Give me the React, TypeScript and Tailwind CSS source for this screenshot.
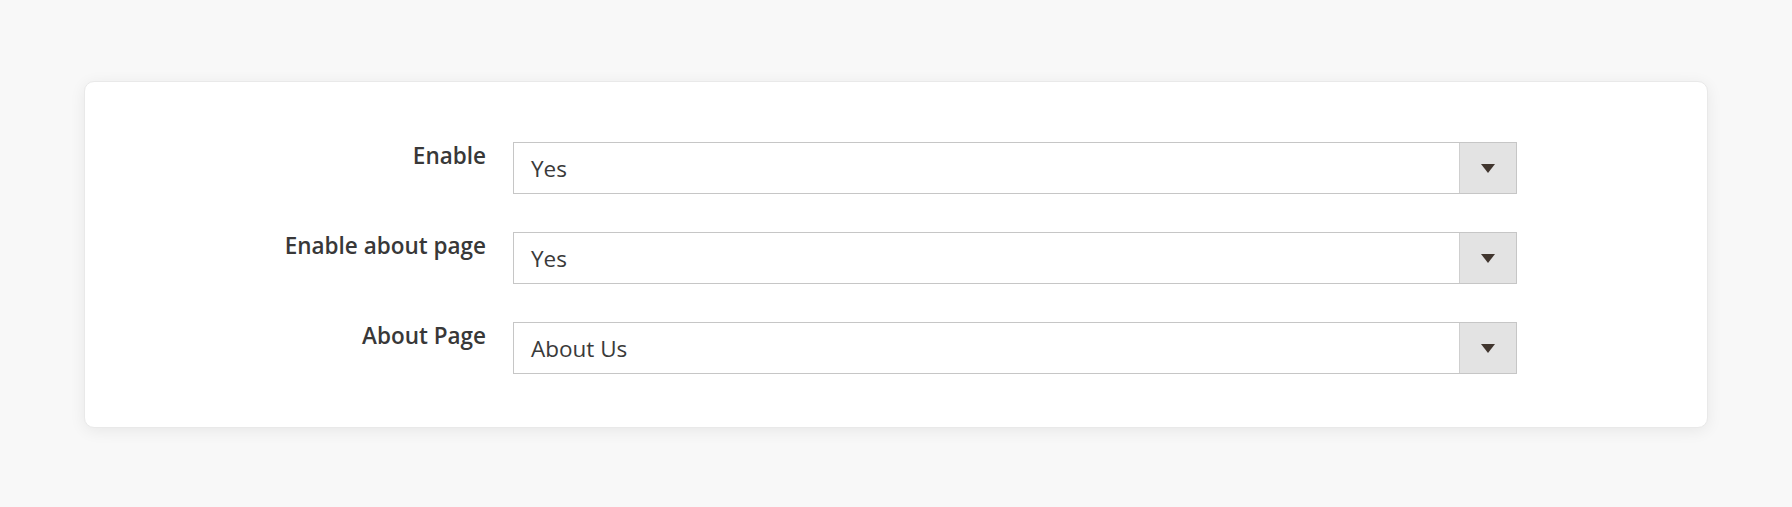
import React from 'react';

type Field = { label: string; value: string };

const fields: Field[] = [
  { label: 'Enable', value: 'Yes' },
  { label: 'Enable about page', value: 'Yes' },
  { label: 'About Page', value: 'About Us' },
];

const SelectBox: React.FC<{ value: string }> = ({ value }) => (
  <div className="flex h-[52px] w-[1004px] border border-[#c6c6c6] bg-white">
    <div className="flex flex-1 items-center pl-[17px] pt-[2px] text-[22.5px] leading-[30px] text-[#3a3a3a]">
      {value}
    </div>
    <div className="flex w-[57px] items-center justify-center border-l border-[#cfcfcf] bg-[#e3e3e3]">
      <span className="block h-0 w-0 border-x-[7px] border-t-[9px] border-x-transparent border-t-[#41362f]" />
    </div>
  </div>
);

export default function App() {
  return (
    <div
      className="min-h-screen bg-[#f8f8f8] px-[84px] pt-[81px] pb-[80px]"
      style={{ fontFamily: '"Open Sans", "Noto Sans", sans-serif' }}
    >
      <div className="flex flex-col gap-[38px] rounded-[10px] border border-[#e9e9e9] bg-white pt-[60px] pb-[53px] shadow-[0_3px_16px_rgba(0,0,0,0.07)]">
        {fields.map(f => (
          <div key={f.label} className="flex items-start gap-[27px]">
            <label className="-mt-[1px] w-[401px] text-right text-[22.5px] font-semibold leading-[30px] text-[#383838]">
              {f.label}
            </label>
            <SelectBox value={f.value} />
          </div>
        ))}
      </div>
    </div>
  );
}
